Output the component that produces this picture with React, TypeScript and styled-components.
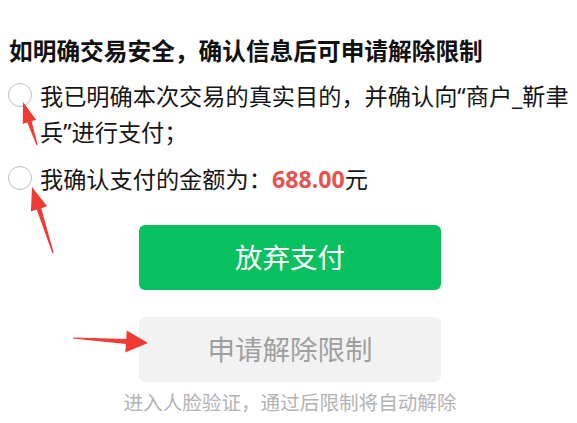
import React from "react";
import styled, { createGlobalStyle } from "styled-components";

const GlobalStyle = createGlobalStyle`
  html, body {
    margin: 0;
    padding: 0;
    background: #fff;
  }
  body {
    font-family: "Noto Sans", "Noto Sans CJK SC", sans-serif;
    color: #111;
  }
`;

type Pt = [number, number];

// tapered annotation arrow: thin tail, shaft widening toward a triangular head
const arrowPoints = (tail: Pt, tip: Pt, headLen: number, headHalf: number, shaftHalf: number) => {
  const dx = tip[0] - tail[0];
  const dy = tip[1] - tail[1];
  const len = Math.hypot(dx, dy);
  const ux = dx / len;
  const uy = dy / len;
  const nx = -uy;
  const ny = ux;
  const bx = tip[0] - ux * headLen;
  const by = tip[1] - uy * headLen;
  const pts: Pt[] = [
    [tail[0] + nx * 0.6, tail[1] + ny * 0.6],
    [bx + nx * shaftHalf, by + ny * shaftHalf],
    [bx + nx * headHalf, by + ny * headHalf],
    tip,
    [bx - nx * headHalf, by - ny * headHalf],
    [bx - nx * shaftHalf, by - ny * shaftHalf],
    [tail[0] - nx * 0.6, tail[1] - ny * 0.6],
  ];
  return pts.map(p => `${p[0].toFixed(1)},${p[1].toFixed(1)}`).join(" ");
};

const arrows = [
  { tail: [37, 145] as Pt, tip: [23, 102] as Pt, headLen: 21, headHalf: 7, shaftHalf: 2.2 },
  { tail: [53, 253] as Pt, tip: [32, 187] as Pt, headLen: 23, headHalf: 8.5, shaftHalf: 2.4 },
  { tail: [73, 338] as Pt, tip: [148, 343] as Pt, headLen: 22, headHalf: 11, shaftHalf: 2.6 },
];

export default function App() {
  return (
    <Page>
      <GlobalStyle />
      <Title>如明确交易安全，确认信息后可申请解除限制</Title>
      <CheckList>
        <CheckItem>
          <Radio />
          <ItemText>我已明确本次交易的真实目的，并确认向“商户_靳聿兵”进行支付；</ItemText>
        </CheckItem>
        <CheckItem>
          <Radio />
          <ItemText>
            我确认支付的金额为：<Amount>688.00</Amount>元
          </ItemText>
        </CheckItem>
      </CheckList>
      <Actions>
        <Button variant="primary">放弃支付</Button>
        <Button variant="disabled">申请解除限制</Button>
        <Hint>进入人脸验证，通过后限制将自动解除</Hint>
      </Actions>
      <Overlay width="577" height="423" viewBox="0 0 577 423">
        {arrows.map((a, i) => (
          <polygon
            key={i}
            points={arrowPoints(a.tail, a.tip, a.headLen, a.headHalf, a.shaftHalf)}
            fill="#f23a35"
          />
        ))}
      </Overlay>
    </Page>
  );
}

const Page = styled.div`
  position: relative;
  width: 577px;
  height: 423px;
  overflow: hidden;
  box-sizing: border-box;
  padding: 35px 0 0 9px;
`;

const Title = styled.h1`
  margin: 0;
  font-size: 23.7px;
  line-height: 32px;
  font-weight: 700;
  color: #111;
  letter-spacing: 0;
`;

const CheckList = styled.div`
  display: flex;
  flex-direction: column;
  gap: 12px;
  margin-top: 12px;
`;

const CheckItem = styled.div`
  display: flex;
  align-items: flex-start;
  gap: 8px;
`;

const Radio = styled.span`
  flex: none;
  width: 22px;
  height: 22px;
  margin-top: 4px;
  margin-left: -1px;
  border-radius: 50%;
  border: 1px solid #bdbdbd;
  background: #fff;
`;

const ItemText = styled.div`
  font-size: 23.2px;
  line-height: 35.5px;
  color: #161616;
  padding-right: 4px;
`;

const Amount = styled.span`
  font-family: "Noto Sans", sans-serif;
  font-weight: 700;
  color: #e85150;
`;

const Actions = styled.div`
  display: flex;
  flex-direction: column;
  align-items: center;
  margin: 27px 0 0 -9px;
`;

const Button = styled.div<{ variant: "primary" | "disabled" }>`
  width: 302px;
  height: 65px;
  border-radius: 6px;
  display: flex;
  align-items: center;
  justify-content: center;
  padding-bottom: 3px;
  box-sizing: border-box;
  font-size: 27.5px;
  margin-left: 3px;
  background: ${p => (p.variant === "primary" ? "#07c160" : "#f2f2f2")};
  color: ${p => (p.variant === "primary" ? "#fff" : "#9f9f9f")};
  & + & {
    margin-top: 27px;
  }
`;

const Hint = styled.div`
  margin-top: 8px;
  margin-left: 3px;
  font-size: 19.6px;
  line-height: 26px;
  color: #b3b3b3;
`;

const Overlay = styled.svg`
  position: absolute;
  left: 0;
  top: 0;
  pointer-events: none;
`;
